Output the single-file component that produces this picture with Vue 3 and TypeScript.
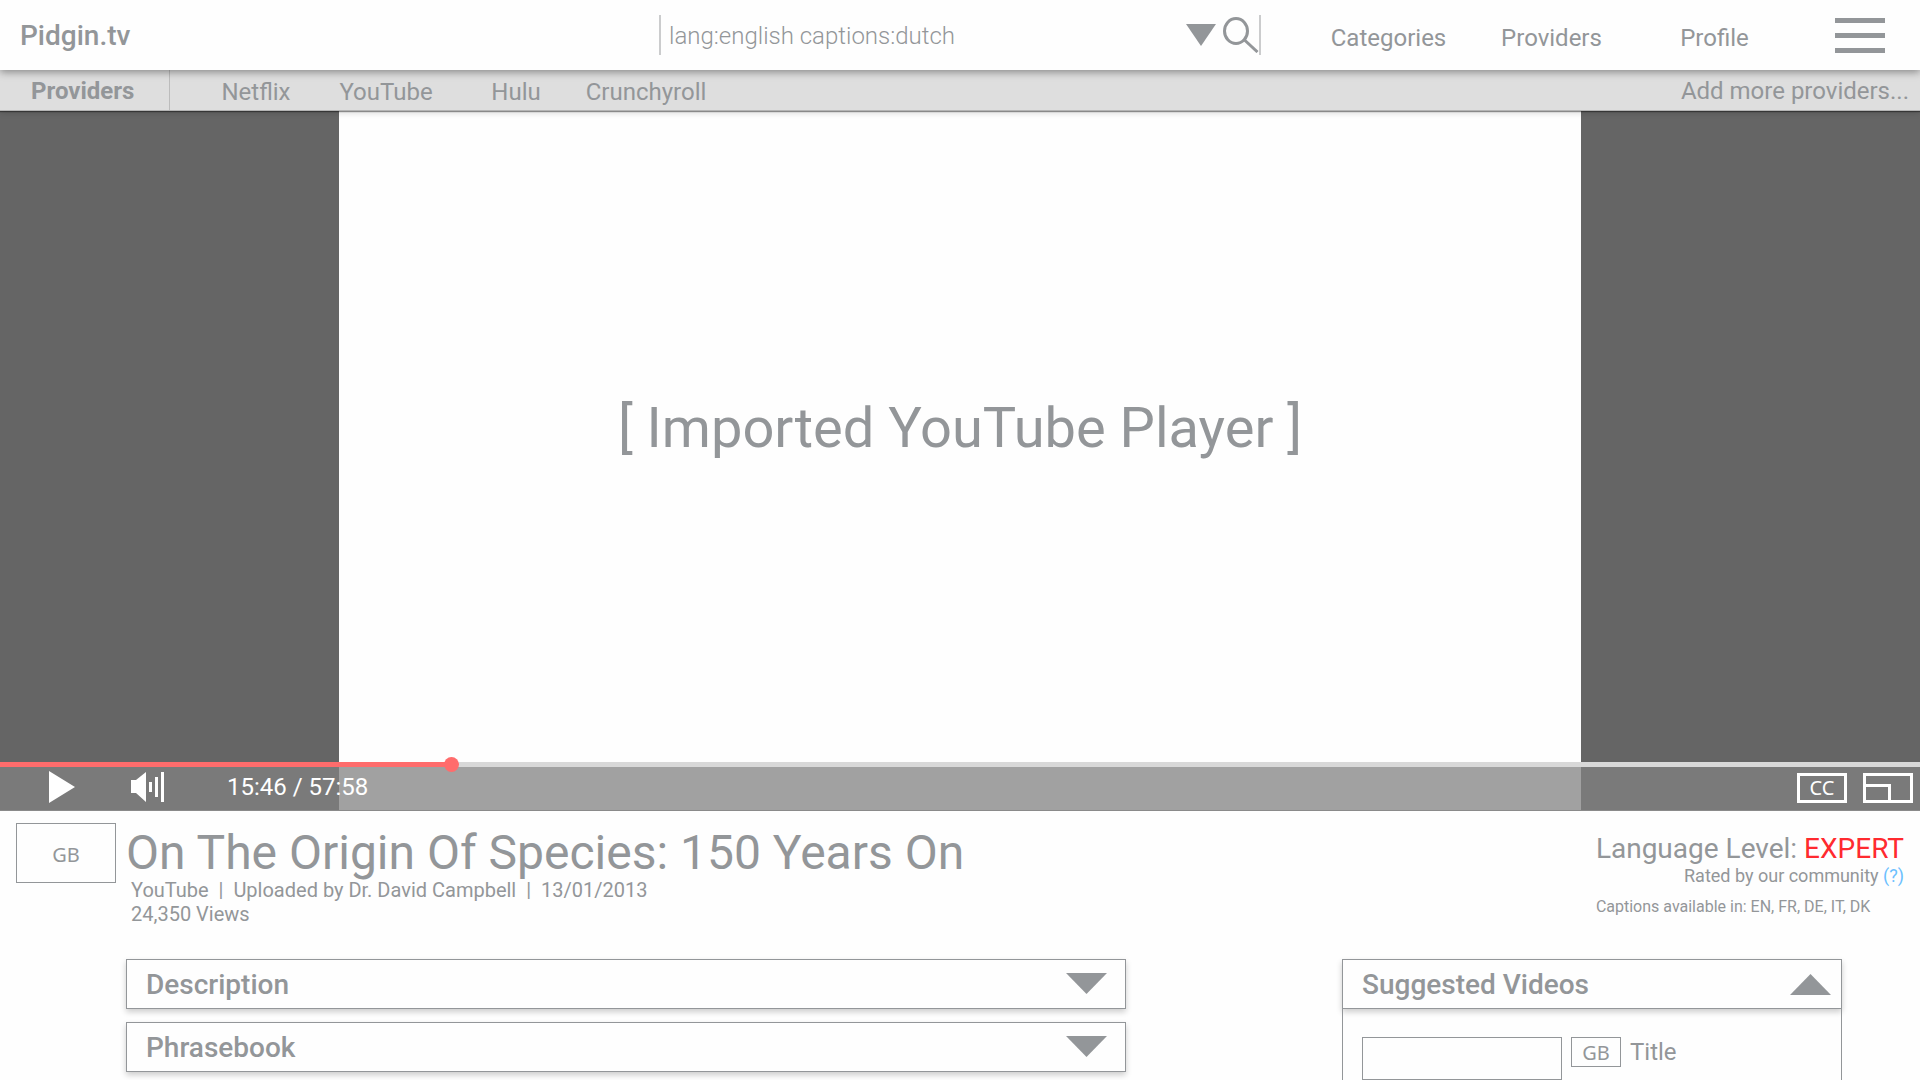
<script setup lang="ts">
import { computed, ref } from 'vue'

interface Panel {
  id: string
  title: string
  open: boolean
}

const query = ref('lang:english captions:dutch')
const navLinks = ['Categories', 'Providers', 'Profile']
const providers = ['Netflix', 'YouTube', 'Hulu', 'Crunchyroll']
const position = ref(233)
const played = computed(() => `${position.value / 10}%`)
const suggestedOpen = ref(true)
const panels = ref<Panel[]>([
  { id: 'description', title: 'Description', open: false },
  { id: 'phrasebook', title: 'Phrasebook', open: false },
])
const suggestions = [{ lang: 'GB', title: 'Title' }]
</script>

<template>
  <div class="page">
    <header class="top">
      <a class="brand" href="#">Pidgin.tv</a>
      <form class="search" role="search" @submit.prevent>
        <input v-model="query" class="search-input" type="text" aria-label="Search videos" />
        <button class="icon-btn" type="button" aria-label="Search filters">
          <svg width="30" height="22" viewBox="0 0 30 22"><path d="M0 0H30L15 22Z" fill="currentColor" /></svg>
        </button>
        <button class="icon-btn submit" type="submit" aria-label="Search">
          <svg width="36" height="36" viewBox="0 0 36 36" fill="none" stroke="currentColor" stroke-width="3">
            <ellipse cx="13" cy="14" rx="11.500" ry="12.500" />
            <path d="M21.500 23L34.500 35" />
          </svg>
        </button>
      </form>
      <div class="top-right">
        <nav class="nav" aria-label="Main">
          <a v-for="link in navLinks" :key="link" href="#">{{ link }}</a>
        </nav>
        <button class="icon-btn" type="button" aria-label="Menu">
          <svg width="50" height="35" viewBox="0 0 50 35" fill="currentColor">
            <path d="M0 0H50V5H0ZM0 15H50V20H0ZM0 30H50V35H0Z" />
          </svg>
        </button>
      </div>
    </header>

    <nav class="providers" aria-label="Providers">
      <strong class="providers-label">Providers</strong>
      <div class="provider-list">
        <a v-for="name in providers" :key="name" href="#">{{ name }}</a>
      </div>
      <a class="add-more" href="#">Add more providers...</a>
    </nav>

    <main>
      <section class="player" aria-label="Video player">
        <div class="stage">[ Imported YouTube Player ]</div>
        <div class="overlay">
          <input
            v-model.number="position"
            class="seek"
            type="range"
            min="0"
            max="1000"
            aria-label="Seek"
            :style="{ '--played': played }"
          />
          <div class="controls">
            <button class="icon-btn play" type="button" aria-label="Play">
              <svg width="26" height="32" viewBox="0 0 26 32"><path d="M0 0L26 16L0 32Z" fill="currentColor" /></svg>
            </button>
            <button class="icon-btn volume" type="button" aria-label="Volume">
              <svg width="33" height="32" viewBox="0 0 33 32" fill="currentColor">
                <path d="M0 9H5L15 1V31L5 22H0ZM18 11H21V21H18ZM24 6H27V26H24ZM30 1H33V31H30Z" />
              </svg>
            </button>
            <span class="time">15:46 / 57:58</span>
            <div class="view-options">
              <button class="box-btn" type="button" aria-label="Closed captions">CC</button>
              <button class="icon-btn" type="button" aria-label="Miniplayer">
                <svg width="50" height="30" viewBox="0 0 50 30" fill="none" stroke="currentColor" stroke-width="3">
                  <path d="M1.500 1.500H48.500V28.500H1.500ZM1.500 12.500H26.500V28.500" />
                </svg>
              </button>
            </div>
          </div>
        </div>
      </section>

      <section class="info">
        <div class="flag">GB</div>
        <div class="heading">
          <h1>On The Origin Of Species: 150 Years On</h1>
          <p class="meta">YouTube&nbsp; |&nbsp; Uploaded by Dr. David Campbell&nbsp; |&nbsp; 13/01/2013<br />24,350 Views</p>
        </div>
        <div class="level">
          <p class="level-name">Language Level: <span class="expert">EXPERT</span></p>
          <p class="rated">Rated by our community <a href="#">(?)</a></p>
          <p class="captions">Captions available in: EN, FR, DE, IT, DK</p>
        </div>
      </section>

      <div class="columns">
        <div class="panels">
          <button
            v-for="panel in panels"
            :key="panel.id"
            class="panel-head"
            type="button"
            :aria-expanded="panel.open"
            @click="panel.open = !panel.open"
          >
            {{ panel.title }}
            <svg width="41" height="22" viewBox="0 0 41 22"><path d="M0 0H41L20.500 21Z" fill="currentColor" /></svg>
          </button>
        </div>
        <aside class="suggested">
          <button
            class="panel-head suggested-head"
            type="button"
            :aria-expanded="suggestedOpen"
            @click="suggestedOpen = !suggestedOpen"
          >
            Suggested Videos
            <svg width="41" height="22" viewBox="0 0 41 22"><path d="M0 22H41L20.500 1Z" fill="currentColor" /></svg>
          </button>
          <ul v-if="suggestedOpen" class="suggested-list">
            <li v-for="item in suggestions" :key="item.title">
              <div class="thumb"></div>
              <span class="flag small">{{ item.lang }}</span>
              <a href="#">{{ item.title }}</a>
            </li>
          </ul>
        </aside>
      </div>
    </main>
  </div>
</template>

<style>
body {
  margin: 0;
  background: #fefefe;
}
</style>

<style scoped>
.page {
  color: #939699;
  font-family: Roboto, 'Liberation Sans', sans-serif;
  font-size: 24px;
}
.page * {
  box-sizing: border-box;
}
a {
  color: inherit;
  text-decoration: none;
}
button,
input {
  color: inherit;
  font: inherit;
}
h1,
p,
ul {
  margin: 0;
  padding: 0;
  font-weight: 400;
}
svg {
  display: block;
}
.icon-btn {
  padding: 0;
  border: 0;
  background: none;
  cursor: pointer;
}

.top {
  position: relative;
  z-index: 3;
  display: grid;
  grid-template-columns: 1fr 602px 1fr;
  align-items: center;
  height: 70px;
  background: #fefefe;
  box-shadow: 0 2px 8px rgba(0, 0, 0, 0.4);
}
.brand {
  padding-left: 20px;
  font-size: 28px;
  font-weight: 500;
}
.search {
  display: flex;
  align-items: center;
  gap: 7px;
  height: 40px;
  border: solid #cbcccd;
  border-width: 0 2px;
}
.search-input {
  flex: 1;
  min-width: 0;
  padding: 2px 8px 0;
  border: 0;
  outline: 0;
  background: none;
  font-weight: 300;
}
.top-right {
  display: flex;
  align-items: center;
  justify-content: flex-end;
  gap: 39px;
  padding-right: 35px;
}
.nav {
  display: flex;
  padding-top: 5px;
}
.nav a {
  width: 163px;
  text-align: center;
}

.providers {
  position: relative;
  z-index: 2;
  display: flex;
  align-items: center;
  height: 41px;
  border-bottom: 1px solid #b4b4b4;
  background: #dedede;
  box-shadow: 0 1px 1px rgba(0, 0, 0, 0.4), 0 2px 6px rgba(0, 0, 0, 0.15);
}
.providers-label {
  width: 170px;
  padding: 2px 0 0 31px;
  border-right: 1px solid #bcbcbc;
  line-height: 38px;
  font-weight: 700;
}
.provider-list {
  display: flex;
  flex: 1;
  padding: 4px 0 0 21px;
}
.provider-list a {
  width: 130px;
  text-align: center;
}
.add-more {
  padding: 2px 11px 0 0;
}

.player {
  position: relative;
  display: flex;
  justify-content: center;
  aspect-ratio: 96 / 35;
  background: #656565;
}
.stage {
  display: flex;
  align-items: center;
  justify-content: center;
  width: 64.7%;
  padding-bottom: 66px;
  background: #fefefe;
  font-size: 56px;
}
.overlay {
  position: absolute;
  right: 0;
  bottom: 0;
  left: 0;
  color: #fff;
}
.seek {
  position: relative;
  z-index: 1;
  display: block;
  width: 100%;
  height: 15px;
  margin: 0 0 -5px;
  appearance: none;
  background: linear-gradient(to right, #ff6c6c var(--played), #d8d8d8 var(--played)) center / 100% 5px no-repeat;
}
.seek::-webkit-slider-thumb {
  width: 15px;
  height: 15px;
  border: 0;
  border-radius: 50%;
  appearance: none;
  background: #ff6c6c;
}
.controls {
  display: flex;
  align-items: center;
  height: 44px;
  padding: 0 7px 3px 49px;
  border-bottom: 1px solid #8a8a8a;
  background: rgba(129, 129, 129, 0.75);
}
.play {
  margin-right: 56px;
}
.volume {
  margin-right: 63px;
}
.time {
  flex: 1;
}
.view-options {
  display: flex;
  gap: 16px;
  padding-top: 2px;
}
.box-btn {
  width: 50px;
  height: 30px;
  padding: 0;
  border: 3px solid #fff;
  background: none;
  font-family: 'Noto Sans', 'Open Sans', sans-serif;
  font-size: 20px;
  line-height: 24px;
}

.info {
  display: flex;
  gap: 10px;
  padding: 12px 16px 33px;
}
.flag {
  width: 100px;
  height: 60px;
  border: 1px solid #939699;
  font-family: 'Noto Sans', 'Open Sans', sans-serif;
  font-size: 20px;
  line-height: 62px;
  text-align: center;
}
.heading {
  flex: 1;
  padding-top: 5px;
}
h1 {
  font-size: 48px;
  line-height: 50px;
}
.meta {
  padding-left: 5px;
  font-size: 20px;
  line-height: 24px;
}
.level {
  padding-top: 11px;
}
.level-name {
  font-size: 28px;
  line-height: 30px;
}
.expert {
  color: #ff2a2f;
}
.rated {
  font-size: 18px;
  line-height: 24px;
  text-align: right;
}
.rated a {
  color: #6cc0ff;
}
.captions {
  margin-top: 7px;
  font-size: 16px;
  line-height: 24px;
}

.columns {
  display: grid;
  grid-template-columns: 2fr 1fr;
  gap: 216px;
  padding: 0 78px 0 126px;
}
.panels {
  display: flex;
  flex-direction: column;
  gap: 13px;
}
.panel-head {
  display: flex;
  align-items: center;
  justify-content: space-between;
  width: 100%;
  height: 50px;
  padding: 0 18px 0 19px;
  border: 1px solid #939699;
  background: #fefefe;
  box-shadow: 0 3px 6px rgba(0, 0, 0, 0.2);
  font-size: 28px;
  font-weight: 500;
  cursor: pointer;
}
.suggested-head {
  padding-right: 10px;
}
.suggested-list {
  padding: 28px 19px 0;
  border: solid #939699;
  border-width: 0 1px;
  list-style: none;
}
.suggested-list li {
  display: flex;
  gap: 9px;
  line-height: 30px;
}
.thumb {
  width: 200px;
  height: 43px;
  border: 1px solid #939699;
}
.small {
  width: 50px;
  height: 30px;
  line-height: 30px;
}
</style>
